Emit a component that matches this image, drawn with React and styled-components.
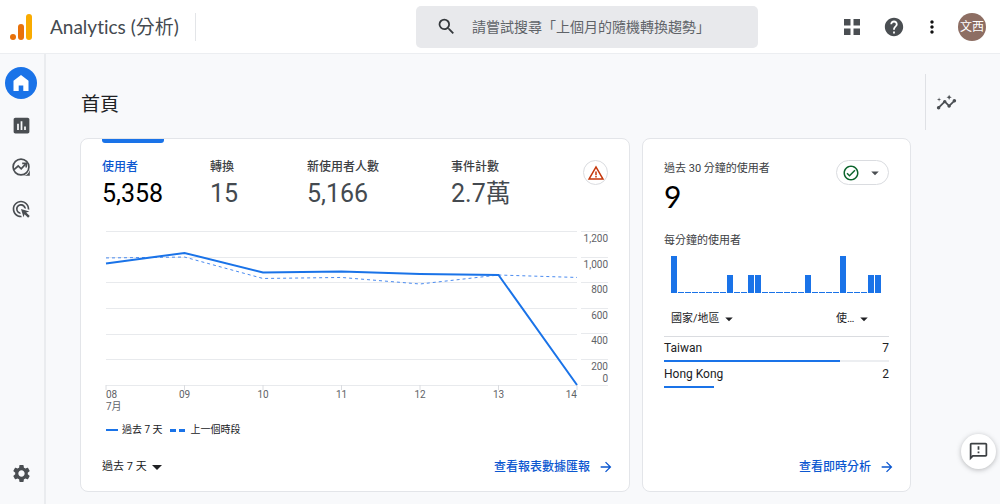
import React, {useState} from "react";
import styled, {createGlobalStyle} from "styled-components";
import {
    MdAdsClick,
    MdArrowDropDown,
    MdArrowForward,
    MdAssessment,
    MdHelp,
    MdInsights,
    MdMoreVert,
    MdOutlineCheckCircle,
    MdOutlineFeedback,
    MdSearch,
    MdSettings,
    MdWarningAmber
} from "react-icons/md";

const BLUE = "#1a73e8";
const LINK = "#0b57d0";

const GlobalStyle = createGlobalStyle`
  * {
    box-sizing: border-box;
  }
  body {
    margin: 0;
    background: #f8f9fb;
    color: #202124;
    font-family: Roboto, "Noto Sans CJK TC", sans-serif;
    font-size: 11px;
  }
  button, input, select {
    font: inherit;
    color: inherit;
    margin: 0;
    padding: 0;
    border: 0;
    background: none;
  }
  button {
    cursor: pointer;
  }
  h1, h2, p {
    margin: 0;
    font-weight: 400;
  }
  svg {
    display: block;
    flex: none;
  }
`;

const Page = styled.div`
  display: flex;
  flex-direction: column;
  min-height: 100vh;
`;

const Header = styled.header`
  display: grid;
  grid-template-columns: minmax(0, 1fr) minmax(200px, 342px) 228px;
  align-items: center;
  height: 54px;
  padding: 0 14px 0 10px;
  background: #fff;
  border-bottom: 1px solid #eceef1;
`;

const Brand = styled.div`
  display: flex;
  align-items: center;
  height: 28px;
`;

const BrandName = styled.h1`
  margin-left: 17px;
  padding-right: 16px;
  border-right: 1px solid #e3e5e8;
  font-family: Lato, "Noto Sans CJK TC", sans-serif;
  font-size: 19px;
  font-variant-ligatures: none;
  line-height: 28px;
  color: #444a50;
  white-space: nowrap;
`;

const SearchBox = styled.label`
  display: flex;
  align-items: center;
  gap: 15px;
  height: 42px;
  padding: 0 20px;
  border-radius: 5px;
  background: #e8e9ec;
  color: #34383c;

  input {
    flex: 1;
    min-width: 0;
    font-size: 14px;
    outline: none;
  }
  input::placeholder {
    color: #5f6368;
    opacity: 1;
  }
`;

const HeaderActions = styled.div`
  display: flex;
  align-items: center;
  justify-content: flex-end;
  gap: 14px;
`;

const IconButton = styled.button`
  display: flex;
  align-items: center;
  justify-content: center;
  width: ${props => props.$wide ? 32 : 24}px;
  height: 24px;
  color: ${props => props.$color || "#4a4e52"};
`;

const Avatar = styled.button`
  width: 28px;
  height: 28px;
  border-radius: 50%;
  background: #8d6e63;
  color: #fff;
  font-size: 12px;
  line-height: 28px;
`;

const Body = styled.div`
  display: flex;
  flex: 1;
`;

const Sidebar = styled.nav`
  display: flex;
  flex-direction: column;
  align-items: center;
  gap: 10px;
  width: 46px;
  padding: 13px 2px 15px 0;
  border-right: 2px solid #eaecef;
`;

const NavLink = styled.a`
  display: flex;
  align-items: center;
  justify-content: center;
  width: 32px;
  height: 32px;
  border-radius: 50%;
  background: ${props => props.$active ? BLUE : "transparent"};
  color: ${props => props.$active ? "#fff" : "#4a4e52"};

  &:last-child {
    margin-top: auto;
  }
`;

const Main = styled.main`
  flex: 1;
  min-width: 0;
  padding: 20px 14px 12px 34px;
`;

const PageTitle = styled.h2`
  padding: 17px 0 19px 1px;
  font-size: 19px;
  line-height: 28px;
`;

const Cards = styled.div`
  display: grid;
  grid-template-columns: minmax(0, 1fr) 269px;
  gap: 12px;
`;

const Card = styled.section`
  display: flex;
  flex-direction: column;
  padding: 0 21px;
  border: 1px solid #e3e5e9;
  border-radius: 8px;
  background: #fff;
`;

const CardTop = styled.div`
  display: flex;
  align-items: flex-start;
  justify-content: space-between;
`;

const Metrics = styled.div`
  display: grid;
  grid-template-columns: 108px 97px 144px auto;
`;

const MetricTab = styled.button`
  text-align: left;
  color: ${props => props.$active ? "#000" : "#444a50"};

  &::before {
    content: "";
    display: block;
    width: 62px;
    height: 4px;
    border-radius: 0 0 3px 3px;
    background: ${props => props.$active ? BLUE : "transparent"};
  }
`;

const MetricLabel = styled.span`
  display: block;
  margin-top: 14px;
  font-size: 12px;
  font-weight: 500;
  line-height: 20px;
  color: ${props => props.$active ? LINK : "#3c4043"};
`;

const MetricValue = styled.span`
  display: block;
  font-size: 25px;
  line-height: 34px;
`;

const StatusBadge = styled.button`
  display: flex;
  align-items: center;
  justify-content: center;
  gap: 6px;
  width: ${props => props.$wide ? 53 : 25}px;
  height: 25px;
  margin-top: 21px;
  border: 1px solid #dadce0;
  border-radius: 13px;
  color: ${props => props.$color};
`;

const ChartArea = styled.div`
  display: grid;
  grid-template-columns: minmax(0, 1fr) 27px;
  column-gap: 4px;
  margin-top: 20px;
  padding-left: 4px;
  color: #5f6368;
  font-size: 10px;
`;

const Plot = styled.svg`
  width: 100%;
  height: 158px;
  overflow: visible;
`;

const YAxis = styled.div`
  display: grid;
  grid-template-rows: repeat(6, 1fr);
  height: 155px;
  border-bottom: 1px solid #e8eaed;
  text-align: right;
`;

const YLabel = styled.div`
  padding-top: 1px;
  border-top: 1px solid #e8eaed;
  line-height: 12px;
`;

const XAxis = styled.div`
  display: grid;
  grid-template-columns: 1fr repeat(5, 2fr) 1fr;
  line-height: 12px;
  text-align: center;

  span:first-child {
    text-align: left;
  }
  span:last-child {
    text-align: right;
  }
`;

const Legend = styled.div`
  display: flex;
  align-items: center;
  gap: 6px;
  margin-top: 9px;
  padding-left: 4px;
  font-size: 10px;
  line-height: 16px;
`;

const LegendItem = styled.span`
  display: flex;
  align-items: center;
  gap: 4px;
`;

const Picker = styled.label`
  display: inline-flex;
  align-items: center;
  gap: 2px;
  color: #202124;

  select {
    appearance: none;
    outline: none;
    line-height: 20px;
    cursor: pointer;
  }
  svg {
    margin: 0 -2px;
  }
`;

const CardFooter = styled.div`
  display: flex;
  align-items: center;
  justify-content: space-between;
  margin: auto -6px 0 0;
  padding: 19px 0 14px;
  line-height: 20px;

  ${Picker} svg {
    margin: -2px -4px;
  }
`;

const ReportLink = styled.a`
  display: flex;
  align-items: center;
  gap: 8px;
  margin-left: auto;
  color: ${LINK};
  font-size: 12px;
  font-weight: 500;
  text-decoration: none;
`;

const RealtimeLabel = styled.p`
  padding-top: ${props => props.$first ? 22 : 0}px;
  line-height: 16px;
  color: #3c4043;
`;

const RealtimeValue = styled.p`
  margin-bottom: 18px;
  font-family: Lato, sans-serif;
  font-size: 30px;
  line-height: 38px;
  color: #000;
`;

const Bars = styled.div`
  display: flex;
  align-items: flex-end;
  gap: 1px;
  height: 37px;
  margin: 7px 8px 0 7px;
`;

const Bar = styled.div`
  flex: 1;
  background: ${BLUE};
`;

const CountryTable = styled.table`
  width: 100%;
  margin-top: 13px;
  border-collapse: collapse;
  font-size: 12px;

  th {
    height: 30px;
    padding: 0 0 4px 7px;
    border-bottom: 1px solid #dadce0;
    font-size: 11px;
    font-weight: 400;
    line-height: 20px;
    text-align: left;
  }
  th:last-child {
    width: 60px;
  }
`;

const CountryCell = styled.td`
  height: 24px;
  padding: 0;
  line-height: 20px;
  text-align: ${props => props.$number ? "right" : "left"};
`;

const ShareCell = styled.td`
  padding: 0;
  background: ${props => props.$track ? "#eceef1" : "transparent"};
`;

const ShareBar = styled.div`
  height: 2px;
  background: ${BLUE};
`;

const Rail = styled.aside`
  display: flex;
  flex-direction: column;
  justify-content: space-between;
  width: 75px;
  padding-top: 20px;
`;

const RailTools = styled.div`
  display: flex;
  align-items: center;
  height: 56px;
  padding-left: 8px;
  border-left: 1px solid #dfe1e5;
`;

const FeedbackButton = styled.button`
  display: flex;
  align-items: center;
  justify-content: center;
  align-self: flex-end;
  width: 35px;
  height: 35px;
  margin: 0 4px 35px 0;
  border-radius: 50%;
  background: #fff;
  box-shadow: 0 1px 5px rgba(60, 64, 67, 0.35);
  color: #3c4043;
`;

const metrics = [
    {label: "使用者", value: "5,358"},
    {label: "轉換", value: "15"},
    {label: "新使用者人數", value: "5,166"},
    {label: "事件計數", value: "2.7萬"}
];

const days = ["08", "09", "10", "11", "12", "13", "14"];
const currentWeek = [947, 1029, 877, 885, 865, 857, 0];
const previousWeek = [990, 997, 830, 838, 787, 857, 838];
const ticks = ["1,200", "1,000", "800", "600", "400", "200"];

const perMinute = [
    2, 0, 0, 0, 0, 0, 0, 0, 1, 0,
    0, 1, 1, 0, 0, 0, 0, 0, 0, 1,
    0, 0, 0, 0, 2, 0, 0, 0, 1, 1
];

const countries = [
    {name: "Taiwan", users: 7, share: 78},
    {name: "Hong Kong", users: 2, share: 22}
];

function toPoints(values) {
    return values.map((value, i) => `${i * 78.5},${154 - value * 154 / 1200}`).join(" ");
}

function Logo() {
    return (
        <svg width="23" height="26" viewBox="0 0 23 26" aria-hidden="true">
            <circle cx="3" cy="23" r="3" fill="#e8710a"/>
            <rect x="8" y="10" width="6" height="16" rx="3" fill="#e8710a"/>
            <rect x="16" y="0" width="6" height="26" rx="3" fill="#f9ab00"/>
        </svg>
    );
}

function AppsIcon() {
    return (
        <svg width="16" height="16" viewBox="0 0 16 16" fill="currentColor" aria-hidden="true">
            <path d="M0 0h6.5v6.5H0zM9.5 0H16v6.5H9.5zM0 9.5h6.5V16H0zM9.5 9.5H16V16H9.5z"/>
        </svg>
    );
}

function HomeIcon() {
    return (
        <svg width="16" height="18" viewBox="0 0 16 18" fill="currentColor" aria-hidden="true">
            <path d="M8 1 .5 6.8V17h5.2v-5.6h4.6V17h5.2V6.8z"/>
        </svg>
    );
}

function ExploreIcon() {
    return (
        <svg width="20" height="20" viewBox="0 0 20 20" fill="none" stroke="currentColor" strokeWidth="1.7"
             aria-hidden="true">
            <circle cx="10" cy="10" r="7.9"/>
            <path d="M3 12.6 7.2 9l3 2.8 4.3-4.6"/>
            <path d="M11.2 6.4h4v4" strokeWidth="1.6"/>
            <path d="M18.8 12.6v6.2h-6.2c3 0 5.6-2.6 6.2-6.2z" fill="currentColor" stroke="none"/>
        </svg>
    );
}

function Dropdown({label, text, size = 18}) {
    return (
        <Picker>
            <select aria-label={label}>
                <option>{text}</option>
            </select>
            <MdArrowDropDown size={size}/>
        </Picker>
    );
}

function UsersChart() {
    return (
        <ChartArea>
            <Plot viewBox="0 0 471 158" preserveAspectRatio="none" role="img" aria-label="使用者">
                {[0, 26, 51, 77, 103, 128, 154].map(y => (
                    <rect key={y} x="0" y={y} width="471" height="1" fill="#e8eaed"/>
                ))}
                {days.map((day, i) => (
                    <path key={day} d={`M${i * 78.5} 154v5`} stroke="#dadce0" vectorEffect="non-scaling-stroke"/>
                ))}
                <polyline points={toPoints(previousWeek)} fill="none" stroke="#4a8bf0" strokeWidth="1"
                          strokeDasharray="3 3" vectorEffect="non-scaling-stroke"/>
                <polyline points={toPoints(currentWeek)} fill="none" stroke={BLUE} strokeWidth="2"
                          vectorEffect="non-scaling-stroke"/>
            </Plot>
            <YAxis>
                {ticks.map(tick => (
                    <YLabel key={tick}>
                        {tick}
                        {tick === "200" && <div>0</div>}
                    </YLabel>
                ))}
            </YAxis>
            <XAxis>
                {days.map((day, i) => (
                    <span key={day}>{day}{i === 0 && <><br/>7月</>}</span>
                ))}
            </XAxis>
        </ChartArea>
    );
}

function OverviewCard() {
    const [active, setActive] = useState(0);

    return (
        <Card>
            <CardTop>
                <Metrics>
                    {metrics.map((metric, i) => (
                        <MetricTab key={metric.label} $active={i === active} onClick={() => setActive(i)}>
                            <MetricLabel $active={i === active}>{metric.label}</MetricLabel>
                            <MetricValue>{metric.value}</MetricValue>
                        </MetricTab>
                    ))}
                </Metrics>
                <StatusBadge $color="#c5370b" aria-label="警告">
                    <MdWarningAmber size={18}/>
                </StatusBadge>
            </CardTop>
            <UsersChart/>
            <Legend>
                <LegendItem>
                    <svg width="12" height="2" aria-hidden="true"><rect width="12" height="2" fill={BLUE}/></svg>
                    過去 7 天
                </LegendItem>
                <LegendItem>
                    <svg width="18" height="3" aria-hidden="true">
                        <path d="M1 0h6v3H1zM10 0h6v3h-6z" fill={BLUE}/>
                    </svg>
                    上一個時段
                </LegendItem>
            </Legend>
            <CardFooter>
                <Dropdown label="日期範圍" text="過去 7 天" size={24}/>
                <ReportLink href="#reports">查看報表數據匯報<MdArrowForward size={16}/></ReportLink>
            </CardFooter>
        </Card>
    );
}

function RealtimeCard() {
    return (
        <Card>
            <CardTop>
                <div>
                    <RealtimeLabel $first>過去 30 分鐘的使用者</RealtimeLabel>
                    <RealtimeValue>9</RealtimeValue>
                </div>
                <StatusBadge $wide $color="#0d652d" aria-label="狀態">
                    <MdOutlineCheckCircle size={18}/>
                    <MdArrowDropDown size={18} color="#4a4e52"/>
                </StatusBadge>
            </CardTop>
            <RealtimeLabel>每分鐘的使用者</RealtimeLabel>
            <Bars>
                {perMinute.map((count, i) => (
                    <Bar key={i} style={{height: count ? `${count * 50}%` : 1}}/>
                ))}
            </Bars>
            <CountryTable>
                <thead>
                    <tr>
                        <th><Dropdown label="維度" text="國家/地區"/></th>
                        <th><Dropdown label="指標" text="使…"/></th>
                    </tr>
                </thead>
                <tbody>
                    {countries.map((country, i) => (
                        <React.Fragment key={country.name}>
                            <tr>
                                <CountryCell>{country.name}</CountryCell>
                                <CountryCell $number>{country.users}</CountryCell>
                            </tr>
                            <tr>
                                <ShareCell colSpan={2} $track={i === 0}>
                                    <ShareBar style={{width: `${country.share}%`}}/>
                                </ShareCell>
                            </tr>
                        </React.Fragment>
                    ))}
                </tbody>
            </CountryTable>
            <CardFooter>
                <ReportLink href="#realtime">查看即時分析<MdArrowForward size={16}/></ReportLink>
            </CardFooter>
        </Card>
    );
}

function App() {
    return (
        <Page>
            <GlobalStyle/>
            <Header>
                <Brand>
                    <Logo/>
                    <BrandName>Analytics (分析)</BrandName>
                </Brand>
                <SearchBox>
                    <MdSearch size={21}/>
                    <input type="search" placeholder="請嘗試搜尋「上個月的隨機轉換趨勢」"/>
                </SearchBox>
                <HeaderActions>
                    <IconButton $wide aria-label="應用程式"><AppsIcon/></IconButton>
                    <IconButton aria-label="說明"><MdHelp size={22}/></IconButton>
                    <IconButton $color="#111" aria-label="更多"><MdMoreVert size={20}/></IconButton>
                    <Avatar>文西</Avatar>
                </HeaderActions>
            </Header>
            <Body>
                <Sidebar>
                    <NavLink href="#home" $active aria-label="首頁"><HomeIcon/></NavLink>
                    <NavLink href="#reports" aria-label="報表"><MdAssessment size={21}/></NavLink>
                    <NavLink href="#explore" aria-label="探索"><ExploreIcon/></NavLink>
                    <NavLink href="#ads" aria-label="廣告"><MdAdsClick size={20}/></NavLink>
                    <NavLink href="#admin" aria-label="管理"><MdSettings size={21}/></NavLink>
                </Sidebar>
                <Main>
                    <PageTitle>首頁</PageTitle>
                    <Cards>
                        <OverviewCard/>
                        <RealtimeCard/>
                    </Cards>
                </Main>
                <Rail>
                    <RailTools>
                        <IconButton aria-label="深入分析"><MdInsights size={21}/></IconButton>
                    </RailTools>
                    <FeedbackButton aria-label="意見回饋"><MdOutlineFeedback size={21}/></FeedbackButton>
                </Rail>
            </Body>
        </Page>
    );
}

export default App;
